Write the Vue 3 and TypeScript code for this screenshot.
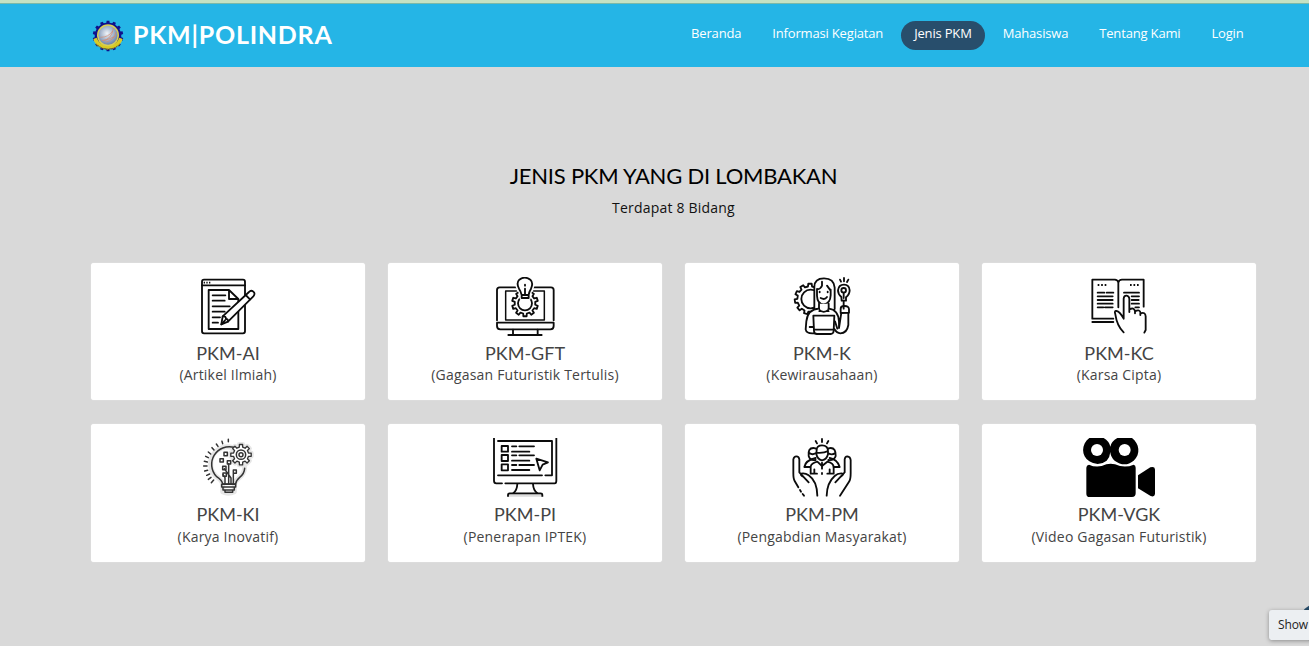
<script setup lang="ts">
interface NavItem {
  label: string
  active?: boolean
}

interface Category {
  id: string
  title: string
  detail: string
  viewBox: string
}

const navItems: NavItem[] = [
  { label: 'Beranda' },
  { label: 'Informasi Kegiatan' },
  { label: 'Jenis PKM', active: true },
  { label: 'Mahasiswa' },
  { label: 'Tentang Kami' },
  { label: 'Login' },
]

const categories: Category[] = [
  { id: 'ai', title: 'PKM-AI', detail: '(Artikel Ilmiah)', viewBox: '-6 21 240 180' },
  { id: 'gft', title: 'PKM-GFT', detail: '(Gagasan Futuristik Tertulis)', viewBox: '0 21 240 180' },
  { id: 'k', title: 'PKM-K', detail: '(Kewirausahaan)', viewBox: '0 21 240 180' },
  { id: 'kc', title: 'PKM-KC', detail: '(Karsa Cipta)', viewBox: '-3 21 240 180' },
  { id: 'ki', title: 'PKM-KI', detail: '(Karya Inovatif)', viewBox: '-6 24 240 180' },
  { id: 'pi', title: 'PKM-PI', detail: '(Penerapan IPTEK)', viewBox: '0 24 240 180' },
  { id: 'pm', title: 'PKM-PM', detail: '(Pengabdian Masyarakat)', viewBox: '0 24 240 180' },
  { id: 'vgk', title: 'PKM-VGK', detail: '(Video Gagasan Futuristik)', viewBox: '12 24 240 180' },
]

// Closed outline of a gear wheel with evenly spaced teeth.
function gear(cx: number, cy: number, outer: number, inner: number, teeth: number): string {
  const step = (Math.PI * 2) / teeth
  const points: string[] = []
  for (let i = 0; i < teeth; i++) {
    const a = i * step - Math.PI / 2
    const corners: [number, number][] = [
      [a - step * 0.28, inner],
      [a - step * 0.2, outer],
      [a + step * 0.2, outer],
      [a + step * 0.28, inner],
    ]
    for (const [angle, r] of corners) {
      points.push(`${(cx + r * Math.cos(angle)).toFixed(1)} ${(cy + r * Math.sin(angle)).toFixed(1)}`)
    }
  }
  return `M${points.join('L')}Z`
}

const logoGear = gear(84, 107, 46, 40, 14)
const monitorGear = gear(120, 100, 39, 31, 10)
const personGear = gear(84, 87, 46, 38, 11)
const bulbGear = gear(153, 74, 31, 23, 8)
</script>

<template>
  <div class="page">
    <header class="header">
      <a class="brand">
        <svg class="logo" viewBox="36 59 96 96" aria-hidden="true">
          <defs>
            <radialGradient id="globe" cx="45%" cy="40%" r="60%">
              <stop offset="0" stop-color="#f1f4f8" />
              <stop offset="0.5" stop-color="#aebdd2" />
              <stop offset="1" stop-color="#6d83a8" />
            </radialGradient>
          </defs>
          <path :d="logoGear" fill="#10108a" />
          <path d="M40 116A45 38 0 0 0 128 116L118 112A36 34 0 0 1 50 112Z" fill="#d8cb24" />
          <circle cx="84" cy="105" r="33" fill="#d9cf55" />
          <circle cx="84" cy="105" r="28.5" fill="url(#globe)" />
          <path d="M66 121Q96 118 100 83M76 126Q104 119 108 95M61 111Q86 111 98 92M71 122L106 108" fill="none" stroke="#d98a6a" stroke-width="2" />
          <path d="M48 131Q84 163 120 131" fill="none" stroke="#817624" stroke-width="4" stroke-dasharray="4 2" />
        </svg>
        <span class="brand-name">PKM|POLINDRA</span>
      </a>
      <nav class="nav">
        <a v-for="item in navItems" :key="item.label" class="nav-link" :class="{ active: item.active }">{{ item.label }}</a>
      </nav>
    </header>

    <main class="content">
      <div class="heading">
        <h2>JENIS PKM YANG DI LOMBAKAN</h2>
        <p>Terdapat 8 Bidang</p>
      </div>

      <section class="grid">
        <article v-for="c in categories" :key="c.id" class="card">
          <svg class="icon" :viewBox="c.viewBox" aria-hidden="true">
            <g v-if="c.id === 'ai'">
              <rect x="36" y="29" width="129" height="161" rx="6" />
              <path d="M36 46H165" />
              <path d="M41 38H63" stroke-dasharray="4 4" class="dots" />
              <path d="M117 60H56V177H145V87L117 60V87H145" />
              <path d="M68 76H106M68 92H104M68 109H119M68 125H104M68 142H90M68 158H84" />
              <path d="M94 163L98 139L177 66Q183 59 190 65T190 79L114 155Z" class="white" />
              <path d="M98 139Q108 138 108 147Q115 147 114 155M167 75L180 88M94 163L105 151" />
            </g>

            <g v-else-if="c.id === 'gft'">
              <path d="M36 151V60Q36 52 44 52H98M142 52H198Q206 52 206 60V151" />
              <path d="M62 63H94M146 63H178V150H62V63" stroke-width="4.5" />
              <path d="M36 158H206V168Q206 178 196 178H46Q36 178 36 168Z" />
              <path d="M84 179V193M158 179V193M70 195H170" />
              <path :d="monitorGear" class="white" />
              <circle cx="120" cy="100" r="21" />
              <path d="M110 83V72Q107 63 102 56Q93 39 103 29Q119 15 136 29Q146 39 138 56Q132 66 131 74V83Z" stroke="#fff" stroke-width="14" fill="#fff" />
              <path d="M110 75Q107 63 102 56Q93 39 103 29Q119 17 136 29Q146 39 138 56Q132 66 131 75ZM110 75V84H131V75M120 73V56M120 44V47" />
            </g>

            <g v-else-if="c.id === 'k'">
              <path :d="personGear" />
              <circle cx="86" cy="87" r="28" />
              <path d="M97 118V51Q97 25 126 25Q156 25 158 53V117Q155 124 142 123H112Q99 123 97 118Z" class="white" />
              <path d="M105 57V77Q106 102 125 103Q145 101 146 76V59M120 35V47Q117 56 105 58M135 47L146 62" />
              <path d="M111 101V119Q125 132 140 119V101" class="white" />
              <path d="M113 65V67M137 65V67M116 84Q128 91 135 81" />
              <path d="M111 116Q77 118 73 154L71 178Q73 190 91 190H98M140 116Q169 119 171 155V174L178 128H199V165Q195 190 175 190Q164 189 157 177" class="white" />
              <path d="M94 137H157L155 183Q154 192 146 192H105Q96 192 96 183Z" class="white" />
              <path d="M97 179H154M83 171H94M159 154L166 176" />
              <path d="M176 129V116Q176 108 186 108Q201 107 201 118V128Z" class="white" />
              <path d="M178 81Q168 73 168 61Q170 44 186 44Q202 44 203 61Q203 73 192 82V92H179ZM185 91V116M174 29L177 35M186 24V34M199 29L195 36" />
              <circle cx="185" cy="61" r="7" />
              <path d="M185 68V84" />
            </g>

            <g v-else-if="c.id === 'kc'">
              <path d="M37 146V29H105Q115 31 115 38V112M115 38Q117 29 126 29H191V110M37 146H100M37 156H100" />
              <path d="M53 45H79M150 45H176" stroke-dasharray="5 5.5" class="dots" />
              <path d="M53 68H73M80 68H100M53 79H98M53 90H98M53 101H98M53 112H70M75 112H98M132 68H177M155 79H177M155 90H176M155 101H177M166 112H177" />
              <path d="M131 187Q111 168 106 133Q102 121 110 123Q119 124 131 146V86Q132 76 140 77Q147 78 148 86V118Q163 111 165 124Q180 116 182 130Q196 125 197 139V180L193 188M148 118V126M165 123V130M181 129V135" class="white" />
            </g>

            <g v-else-if="c.id === 'ki'" class="faded">
              <path d="M128 53A51 51 0 0 0 78 139Q96 150 98 162V185Q115 194 133 185V163Q137 151 149 142Q163 131 164 111" class="halo" />
              <path :d="bulbGear" class="halo" />
              <path d="M132 52A53 53 0 0 0 79 139Q96 150 98 162H137Q138 151 149 142Q163 131 164 115" />
              <path d="M95 163H137V171H95ZM99 172V180H133V172M105 181V187H128V181M105 162V143L99 134M116 162V101M123 162V144L103 116M130 162V132" />
              <path :d="bulbGear" class="white" stroke-width="4" />
              <circle cx="153" cy="74" r="14" />
              <circle cx="153" cy="74" r="6" />
              <path d="M102 67H112V77H102ZM90 86H100V96H90ZM112 92H122V102H112ZM98 109H108V119H98ZM99 129H109V139H99ZM130 120H139V130H130Z" />
              <path d="M44 123L53 121M41 108H51M43 94L52 96M47 79L55 83M55 66L62 72M66 53L72 60M79 42L84 49M96 34L98 41M115 28V35M50 136L59 132M55 148L63 142M64 158L71 150" />
            </g>

            <g v-else-if="c.id === 'pi'">
              <path d="M27 20V152Q27 160 34 160H51M61 160H209Q214 160 214 152V20" />
              <path d="M39 33H201V136H181M171 136H39Z" />
              <path d="M50 48H69V65H50ZM50 75H69V93H50ZM50 103H69V121H50ZM81 49H94M103 49H147M81 65H133M81 76H94M103 76H147M81 92H133M81 105H94M103 105H147M81 120H133" />
              <path d="M154 86L189 97L173 104L164 121Z" />
              <path d="M97 162Q96 181 85 190M144 162Q145 181 157 190" />
              <path d="M69 200V194Q69 190 74 190H167Q172 190 172 194V200" fill="#ddd" class="dots" />
            </g>

            <g v-else-if="c.id === 'pm'">
              <path d="M49 172L38 153Q34 147 34 130V88Q36 79 43 79Q51 79 52 88V127L80 157M61 139Q51 130 63 130Q72 130 80 136Q105 153 106 197M54 180L57 185M62 192L66 197" />
              <path d="M188 127V88Q189 79 196 79Q205 80 206 90V130Q206 147 202 154L174 197M188 127L160 157M178 139Q190 130 178 130Q166 130 158 138Q135 158 134 197" />
              <path d="M101 90Q84 93 80 78Q77 54 94 54Q101 54 105 58M139 90Q157 92 161 78Q162 54 146 54Q139 54 136 58M82 69Q91 76 101 70M141 71Q151 76 160 69" />
              <path d="M101 84Q70 91 67 111H84M143 84Q167 89 173 111H155" />
              <path d="M86 131V110Q88 99 106 95L120 108L136 95Q155 99 155 112V131H136M86 131H105M97 118V131M143 118V131M120 98V116M120 129V132" />
              <path d="M104 60Q104 46 120 46Q138 46 138 63V73Q134 89 120 91Q106 88 103 72ZM104 68Q125 70 138 63" class="white" />
              <path d="M120 27V36M101 33L105 40M139 33L135 40" />
            </g>

            <g v-else class="solid">
              <path d="M43 24H86Q103 34 106 50Q109 34 127 24H171C193 40 198 73 176 92Q149 114 119 92Q106 80 106 66Q105 81 95 92Q70 111 43 94C18 78 18 43 43 24Z" />
              <circle cx="66" cy="60" r="18" fill="#fff" />
              <circle cx="149" cy="60" r="18" fill="#fff" />
              <path d="M42 104Q67 116 94 103Q107 99 120 103Q149 116 176 104Q182 106 182 113V190Q182 201 171 201H44Q34 201 34 191V113Q34 106 42 104Z" />
              <path d="M189 136L226 112Q239 108 240 118V192Q239 202 227 198L189 175Z" />
            </g>
          </svg>
          <h3>{{ c.title }}</h3>
          <p>{{ c.detail }}</p>
        </article>
      </section>
    </main>

    <div class="scroll-top"></div>
    <div class="tooltip">Show</div>
  </div>
</template>

<style>
body {
  overflow: hidden;
}
</style>

<style scoped>
.page {
  position: relative;
  box-sizing: border-box;
  width: 1309px;
  height: 646px;
  overflow: hidden;
  background: #d9d9d9;
  font-family: "Open Sans", sans-serif;
}

.header {
  box-sizing: border-box;
  height: 67px;
  padding: 0 52px 0 92px;
  display: flex;
  align-items: flex-start;
  justify-content: space-between;
  background: #25b5e6;
  border-top: 3px solid #c5e2c3;
  box-shadow: inset 0 1px 0 #7bb9a8;
}

.brand {
  display: flex;
  align-items: flex-start;
  gap: 9px;
  margin-top: 15px;
}

.logo {
  width: 32px;
  height: 32px;
  margin-top: 2px;
}

.brand-name {
  color: #fff;
  font: 700 25px/32px Lato, sans-serif;
  letter-spacing: 0.75px;
}

.nav {
  display: flex;
  gap: 4px;
  margin-top: 18px;
}

.nav-link {
  height: 29px;
  padding: 0 13.5px;
  border-radius: 15px;
  color: #fff;
  font-size: 13px;
  line-height: 25px;
  letter-spacing: -0.17px;
  white-space: nowrap;
}

.nav-link.active {
  background: #284e6c;
}

.content {
  width: 1165px;
  margin-left: 91px;
}

.heading {
  padding-top: 94px;
  height: 102px;
  text-align: center;
}

.heading h2 {
  margin: 0;
  color: #000;
  font: 400 22px/30px Lato, sans-serif;
  letter-spacing: -0.22px;
}

.heading p {
  margin: 5px 0 0;
  color: #111;
  font-size: 14px;
  line-height: 24px;
  letter-spacing: 0.2px;
}

.grid {
  display: grid;
  grid-template-columns: repeat(4, 274px);
  grid-template-rows: 137px 138px;
  gap: 24px 23px;
}

.card {
  box-sizing: border-box;
  display: flex;
  flex-direction: column;
  align-items: center;
  padding-top: 14px;
  border-radius: 3px;
  background: #fff;
  box-shadow: 0 0 1px rgba(255, 255, 255, 0.9);
}

.icon {
  flex: none;
  width: 80px;
  height: 60px;
  fill: none;
  stroke: #0c0c0c;
  stroke-width: 5.5;
  stroke-linecap: round;
  stroke-linejoin: round;
}

.white {
  fill: #fff;
}

.dots {
  stroke-linecap: butt;
}

.faded {
  stroke: #333;
  stroke-width: 4.5;
}

.halo {
  fill: #fff;
  stroke: #e6e6e6;
  stroke-width: 15;
}

.solid {
  fill: #000;
  stroke: none;
}

.card h3 {
  margin: 4px 0 0;
  color: #444;
  font: 400 18px/24px Lato, sans-serif;
}

.card p {
  margin: 0;
  color: #444;
  font-size: 14px;
  line-height: 19px;
  letter-spacing: 0.2px;
}

.card:nth-child(n + 5) p {
  margin-top: 1px;
}

.scroll-top {
  position: absolute;
  left: 1299px;
  top: 603px;
  width: 40px;
  height: 40px;
  border-radius: 50%;
  background: #284e6c;
}

.tooltip {
  position: absolute;
  left: 1269px;
  top: 610px;
  box-sizing: border-box;
  width: 50px;
  height: 30px;
  padding-left: 9px;
  border-radius: 3px;
  background: #eceff2;
  box-shadow: 0 1px 4px rgba(0, 0, 0, 0.35);
  color: #222;
  font-size: 12px;
  line-height: 30px;
  letter-spacing: -0.1px;
}
</style>
